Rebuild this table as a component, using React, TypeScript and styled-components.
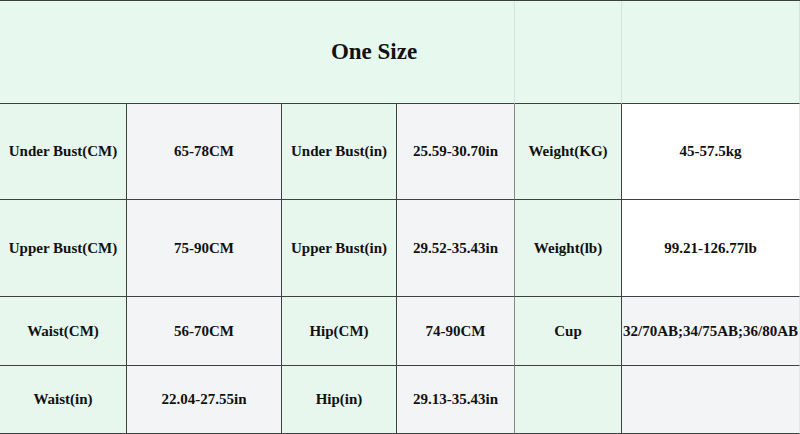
import styled, { createGlobalStyle } from 'styled-components';

const GlobalStyle = createGlobalStyle`
  html, body {
    margin: 0;
    padding: 0;
    background: #ffffff;
  }
`;

type Tone = 'green' | 'grey' | 'white';

const toneColors: Record<Tone, string> = {
  green: '#e7f7ed',
  grey: '#f3f4f6',
  white: '#ffffff',
};

const SizeChart = styled.div`
  width: 800px;
  height: 434px;
  box-sizing: border-box;
  display: grid;
  grid-template-columns: 127px 155px 115px 118px 107px 178px;
  grid-template-rows: 103px 96px 97px 69px 68px;
  border-top: 1px solid #3c423f;
  font-family: 'Liberation Serif', 'Times New Roman', serif;
  font-weight: 700;
  color: #111111;
`;

const HeaderCell = styled.div<{ $span?: number; $offset?: number }>`
  grid-column: span ${(p) => p.$span ?? 1};
  box-sizing: border-box;
  display: flex;
  align-items: center;
  justify-content: center;
  padding-left: ${(p) => p.$offset ?? 0}px;
  background: #e7f8ee;
  border-bottom: 1px solid #3c423f;
  border-right: 1px solid #d3e6d9;
  font-size: 23px;
`;

const Cell = styled.div<{ $tone: Tone; $edge?: string }>`
  box-sizing: border-box;
  display: flex;
  align-items: center;
  justify-content: center;
  background: ${(p) => toneColors[p.$tone]};
  border-bottom: 1px solid #3c423f;
  border-right: 1px solid ${(p) => p.$edge ?? '#3c423f'};
  font-size: 15px;
  white-space: nowrap;
`;

const rows: string[][] = [
  ['Under Bust(CM)', '65-78CM', 'Under Bust(in)', '25.59-30.70in', 'Weight(KG)', '45-57.5kg'],
  ['Upper Bust(CM)', '75-90CM', 'Upper Bust(in)', '29.52-35.43in', 'Weight(lb)', '99.21-126.77lb'],
  ['Waist(CM)', '56-70CM', 'Hip(CM)', '74-90CM', 'Cup', '32/70AB;34/75AB;36/80AB'],
  ['Waist(in)', '22.04-27.55in', 'Hip(in)', '29.13-35.43in', '', ''],
];

const toneFor = (row: number, col: number): Tone => {
  if (col % 2 === 0) return 'green';
  if (col === 5 && row < 2) return 'white';
  return 'grey';
};

const edgeFor = (col: number): string | undefined => {
  if (col === 3) return '#858a87';
  if (col === 5) return '#e4e6e8';
  return undefined;
};

const App = () => {
  return (
    <>
      <GlobalStyle />
      <SizeChart>
        <HeaderCell $span={4} $offset={234}>One Size</HeaderCell>
        <HeaderCell />
        <HeaderCell />
        {rows.map((row, r) =>
          row.map((text, c) => (
            <Cell key={`${r}-${c}`} $tone={toneFor(r, c)} $edge={edgeFor(c)}>
              {text}
            </Cell>
          ))
        )}
      </SizeChart>
    </>
  );
};

export default App;
